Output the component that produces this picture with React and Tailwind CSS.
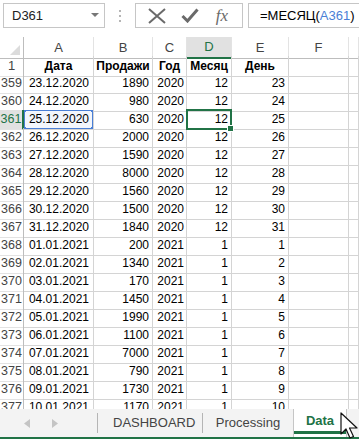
import React from 'react';

const rows = [
  [359, '23.12.2020', 1890, 2020, 12, 23],
  [360, '24.12.2020', 980, 2020, 12, 24],
  [361, '25.12.2020', 630, 2020, 12, 25],
  [362, '26.12.2020', 2000, 2020, 12, 26],
  [363, '27.12.2020', 1590, 2020, 12, 27],
  [364, '28.12.2020', 8000, 2020, 12, 28],
  [365, '29.12.2020', 1560, 2020, 12, 29],
  [366, '30.12.2020', 1500, 2020, 12, 30],
  [367, '31.12.2020', 1840, 2020, 12, 31],
  [368, '01.01.2021', 200, 2021, 1, 1],
  [369, '02.01.2021', 1340, 2021, 1, 2],
  [370, '03.01.2021', 170, 2021, 1, 3],
  [371, '04.01.2021', 1450, 2021, 1, 4],
  [372, '05.01.2021', 1990, 2021, 1, 5],
  [373, '06.01.2021', 1100, 2021, 1, 6],
  [374, '07.01.2021', 7000, 2021, 1, 7],
  [375, '08.01.2021', 790, 2021, 1, 8],
  [376, '09.01.2021', 1730, 2021, 1, 9],
  [377, '10.01.2021', 1170, 2021, 1, 10],
];

const cols = 'grid grid-cols-[24px_70px_59px_34px_45px_57px_60px_1fr]';
const cell = 'border-r border-b border-[#d4d4d4] flex items-center overflow-hidden whitespace-nowrap';

const FormulaBar = () => (
  <div className="h-[37px] flex items-start pt-[3px] shrink-0">
    <div className="ml-[3px] w-[102px] h-[25px] border border-[#c6c6c6] flex items-center justify-between pl-[8px] pr-[5px] text-[13px] text-[#222]">
      <span>D361</span>
      <svg width="8" height="5" viewBox="0 0 8 5"><path d="M0 0h8L4 4z" fill="#777" /></svg>
    </div>
    <div className="w-[30px] h-[25px] flex flex-col items-center justify-center gap-[3px]">
      <span className="w-[2px] h-[2px] bg-[#b5b5b5]" />
      <span className="w-[2px] h-[2px] bg-[#b5b5b5]" />
      <span className="w-[2px] h-[2px] bg-[#b5b5b5]" />
    </div>
    <div className="w-[108px] h-[25px] border border-[#c6c6c6] flex items-center">
      <div className="w-[42px] flex justify-center">
        <svg width="18" height="16" viewBox="0 0 18 16"><path d="M1 1L17 15M17 1L1 15" stroke="#6a6a6a" strokeWidth="2" /></svg>
      </div>
      <div className="w-[24px] flex justify-center">
        <svg width="18" height="15" viewBox="0 0 18 15"><path d="M1.5 8L6.5 13L16.5 1.5" stroke="#6a6a6a" strokeWidth="3" fill="none" /></svg>
      </div>
      <div className="flex-1 flex justify-center text-[17px] italic text-[#6a6a6a] font-['Liberation_Serif',serif] leading-none">
        fx
      </div>
    </div>
    <div className="ml-[5px] flex-1 h-[25px] border border-r-0 border-[#c6c6c6] flex items-center pl-[11px] text-[13px] text-black">
      <span>=МЕСЯЦ(</span>
      <span className="text-[#4a7fd6]">A361</span>
      <span>)</span>
    </div>
  </div>
);

const HeaderRow = () => (
  <div className={`${cols} h-[19px] text-[13px] text-[#444]`}>
    <div className="border-r border-b border-[#bdbdbd] relative">
      <svg className="absolute right-[3px] bottom-[3px]" width="10" height="10" viewBox="0 0 10 10"><path d="M10 0V10H0z" fill="#dcdcdc" /></svg>
    </div>
    {['A', 'B', 'C'].map((l) => (
      <div key={l} className="border-r border-b border-r-[#e3e3e3] border-b-[#bdbdbd] flex items-center justify-center">{l}</div>
    ))}
    <div className="bg-[#e1e1e1] border-r border-r-[#e3e3e3] border-b-2 border-b-[#217346] flex items-center justify-center text-[#217346]">D</div>
    {['E', 'F', ''].map((l, i) => (
      <div key={i} className="border-r border-b border-r-[#e3e3e3] border-b-[#bdbdbd] flex items-center justify-center">{l}</div>
    ))}
  </div>
);

const TitleRow = () => (
  <div className={`${cols} h-[18px] text-[12px]`}>
    <div className="border-r border-b border-r-[#bdbdbd] border-b-[#e3e3e3] flex items-center justify-center text-[#444] text-[13px]">1</div>
    {['Дата', 'Продажи', 'Год', 'Месяц', 'День', '', ''].map((t, i) => (
      <div key={i} className={`${cell} justify-center font-bold text-black`}>{t}</div>
    ))}
  </div>
);

const DataRow = ({ r }) => {
  const sel = r[0] === 361;
  return (
    <div className={`${cols} h-[18px] text-[12px] text-black shrink-0`}>
      <div
        className={
          sel
            ? 'bg-[#e1e1e1] border-b border-b-[#e3e3e3] border-r-2 border-r-[#217346] flex items-center justify-center text-[#217346] text-[12.5px]'
            : 'border-r border-b border-r-[#bdbdbd] border-b-[#e3e3e3] flex items-center justify-center text-[#444] text-[12.5px]'
        }
      >
        {r[0]}
      </div>
      <div className={`${cell} justify-end pr-[4px] relative ${sel ? 'bg-[#f3f6fc]' : ''}`}>
        {r[1]}
        {sel && (
          <>
            <span className="absolute left-0 top-0 right-0 bottom-0 border border-[#4a7fd6]" />
            <span className="absolute left-[-2px] top-[-2px] w-[4px] h-[4px] bg-[#4a7fd6]" />
            <span className="absolute right-[-2px] top-[-2px] w-[4px] h-[4px] bg-[#4a7fd6]" />
            <span className="absolute left-[-2px] bottom-[-2px] w-[4px] h-[4px] bg-[#4a7fd6]" />
            <span className="absolute right-[-2px] bottom-[-2px] w-[4px] h-[4px] bg-[#4a7fd6]" />
          </>
        )}
      </div>
      <div className={`${cell} justify-end pr-[3px]`}>{r[2]}</div>
      <div className={`${cell} justify-end pr-[2px]`}>{r[3]}</div>
      <div className={`${cell} justify-end pr-[3px] ${sel ? 'relative overflow-visible' : ''}`}>
        {r[4]}
        {sel && (
          <>
            <span className="absolute left-[-1px] top-[-1px] right-[-1px] bottom-[-1px] border-2 border-[#217346]" />
            <span className="absolute right-[-3px] bottom-[-3px] w-[5px] h-[5px] bg-[#217346] border border-white box-content" />
          </>
        )}
      </div>
      <div className={`${cell} justify-end pr-[3px]`}>{r[5]}</div>
      <div className={cell} />
      <div className={cell} />
    </div>
  );
};

const Cursor = () => (
  <svg className="absolute left-[340px] top-[412px]" width="20" height="28" viewBox="0 0 20 28">
    <path d="M1 1V22L6 17L10 26L13.5 24.5L9.5 16H17z" fill="#fff" stroke="#111" strokeWidth="1.2" strokeLinejoin="round" />
  </svg>
);

const TabBar = () => (
  <div className="h-[30px] shrink-0 flex flex-col">
    <div className="flex-1 bg-[#f3f3f3] flex items-stretch text-[13px] text-[#444]">
      <div className="w-[98px] flex items-center pl-[24px] gap-[22px] border-r border-[#b5b5b5] my-[4px]">
        <svg width="6" height="9" viewBox="0 0 6 9"><path d="M6 0V9L0 4.5z" fill="#c4c4c4" /></svg>
        <svg width="6" height="9" viewBox="0 0 6 9"><path d="M0 0V9L6 4.5z" fill="#c4c4c4" /></svg>
      </div>
      <div className="w-[105px] flex items-center pl-[15px] border-r border-[#b5b5b5] my-[4px]">DASHBOARD</div>
      <div className="w-[90px] flex items-center justify-center">Processing</div>
      <div className="w-[54px] bg-white border-x border-[#c6c6c6] flex flex-col">
        <div className="flex-1 flex items-center justify-center font-bold text-[#217346] pt-[1px]">Data</div>
        <div className="h-[3px] bg-[#217346] mb-[3px]" />
      </div>
      <div className="flex-1" />
    </div>
    <div className="h-[2px] bg-[#217346]" />
  </div>
);

export default function App() {
  return (
    <div className="relative w-[359px] h-[439px] overflow-hidden bg-white flex flex-col font-['Liberation_Sans',Arial,sans-serif]">
      <FormulaBar />
      <div className="flex-1 overflow-hidden">
        <HeaderRow />
        <TitleRow />
        {rows.map((r) => (
          <DataRow key={r[0]} r={r} />
        ))}
      </div>
      <TabBar />
      <Cursor />
    </div>
  );
}
